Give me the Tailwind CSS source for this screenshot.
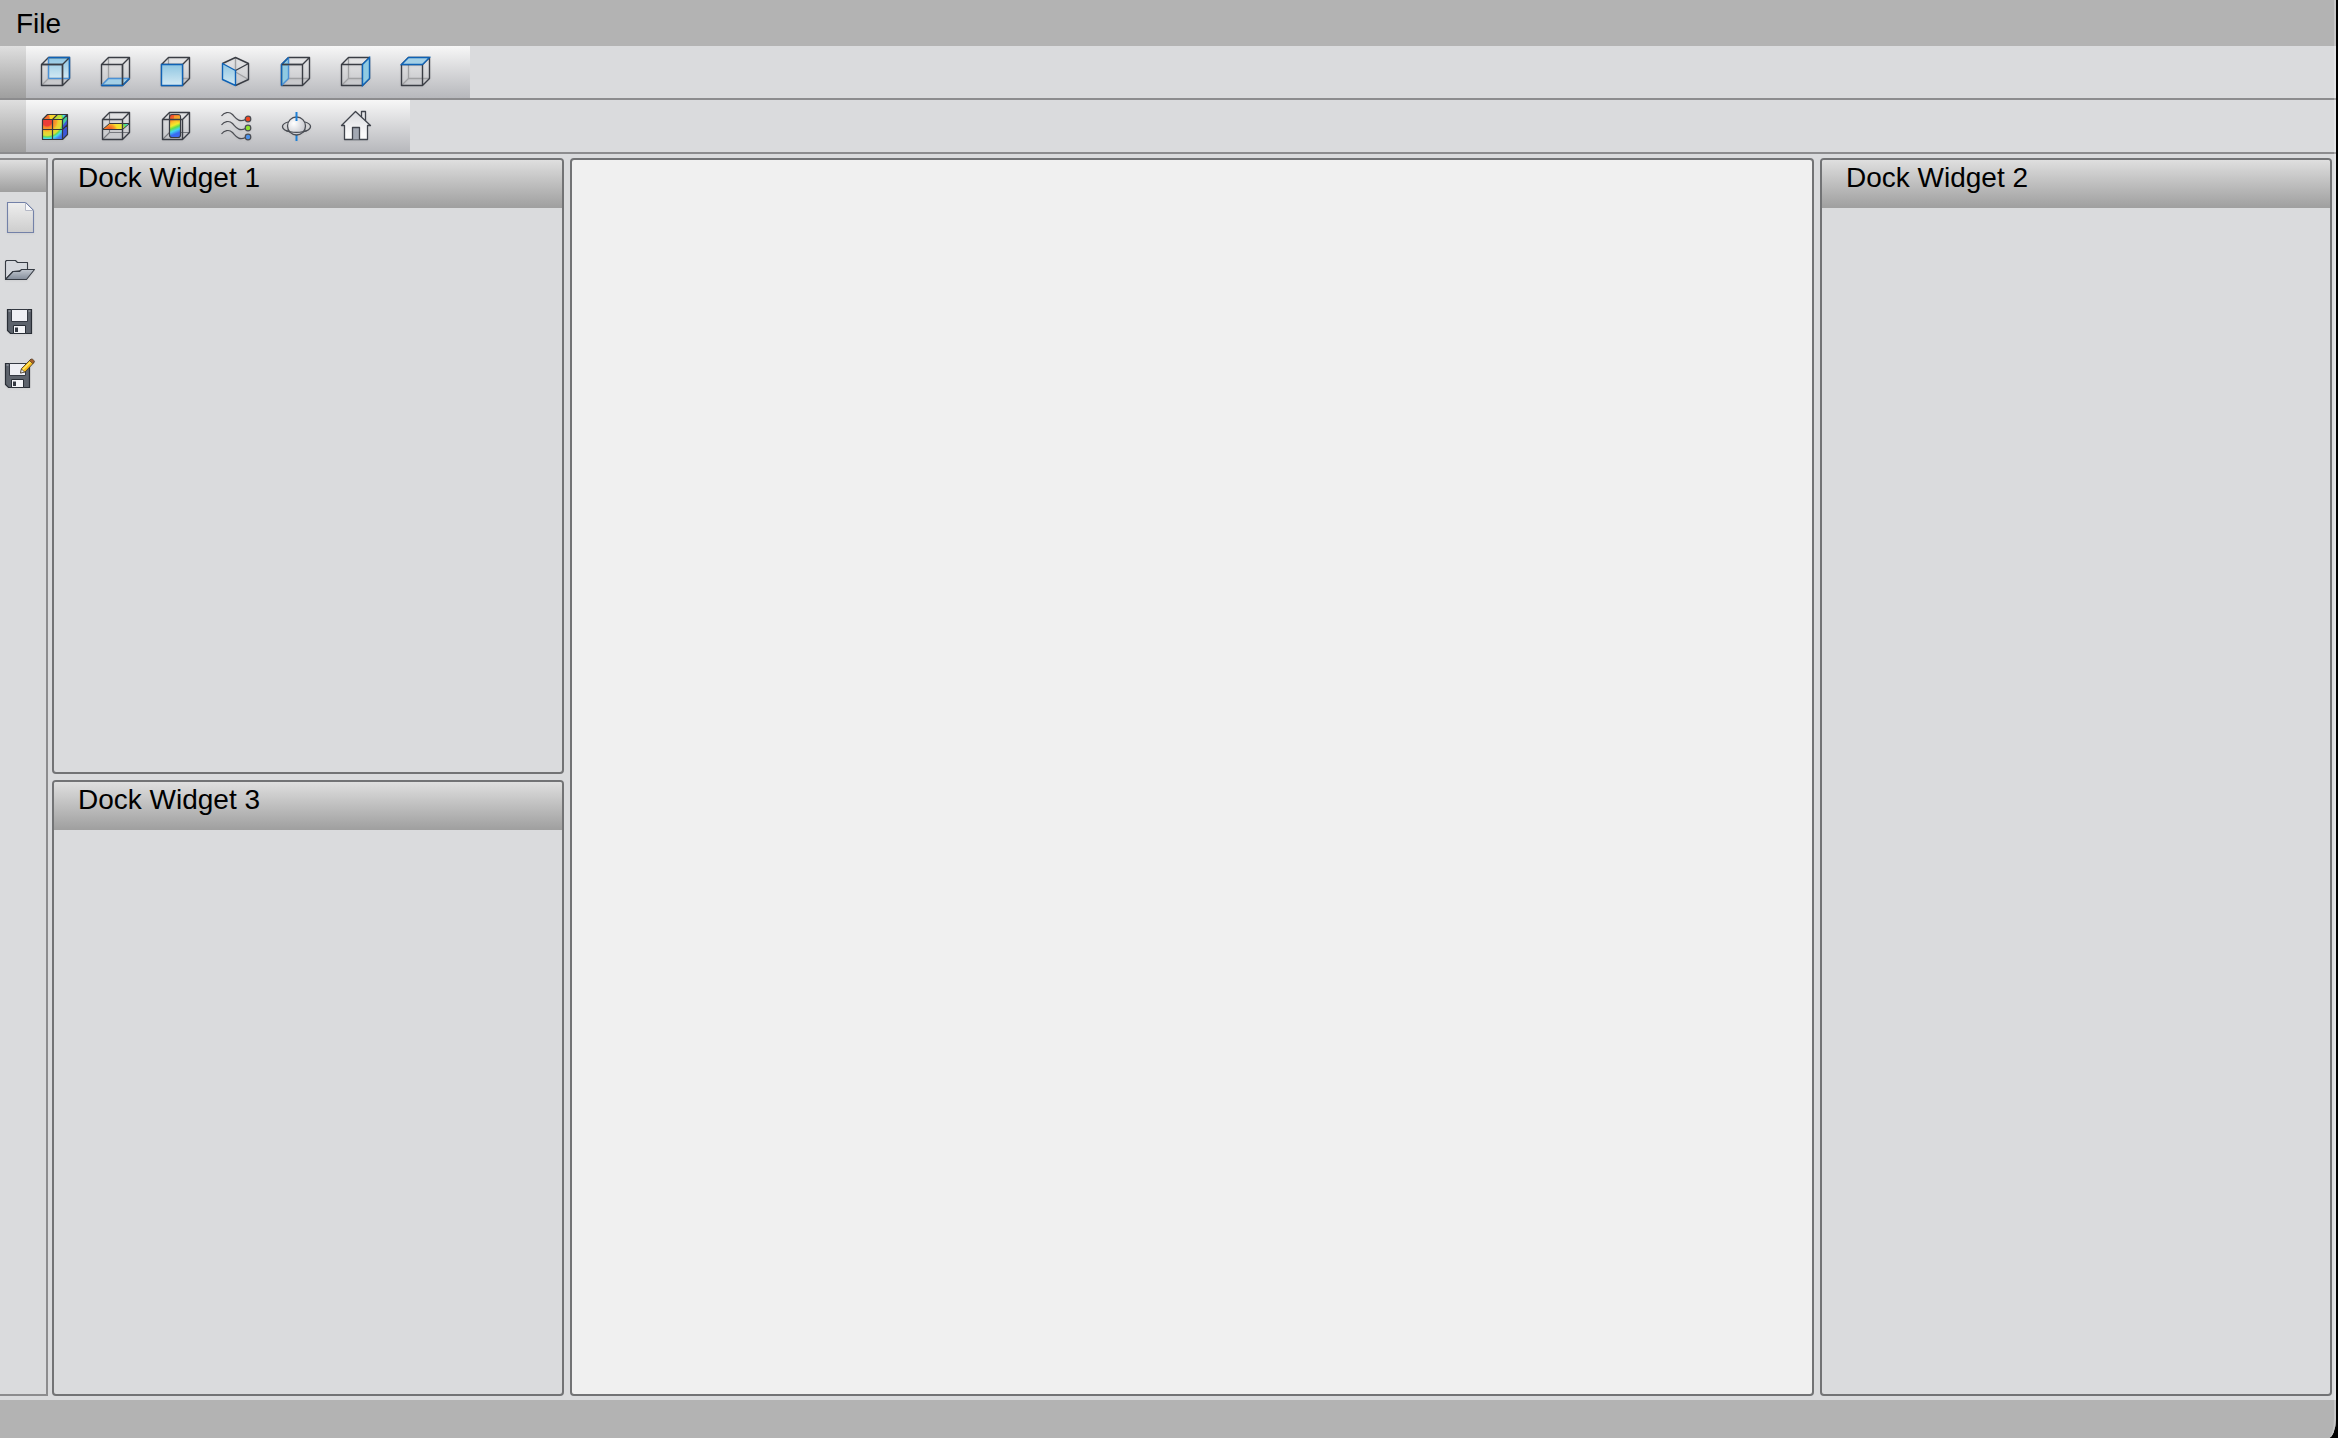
<!DOCTYPE html>
<html lang="en">

<head>
    <meta charset="UTF-8">
    <meta name="viewport" content="width=device-width, initial-scale=1.0">
    <title>Dock Widgets</title>
    <script src="https://cdn.jsdelivr.net/npm/@tailwindcss/browser@4"></script>
</head>

<body class="bg-black h-screen pr-0.5 font-['Liberation_Sans',Arial,sans-serif] text-[28px] leading-8 text-black">

    <!-- shared gradients and cube outlines -->
    <svg class="absolute size-0" aria-hidden="true">
        <defs>
            <linearGradient id="blue" x1="0" y1="0" x2="0" y2="1">
                <stop offset="0" stop-color="#8fc6e2" />
                <stop offset="1" stop-color="#d3e9f3" />
            </linearGradient>
            <linearGradient id="rainbow" x1="0.1" y1="0" x2="0.3" y2="1">
                <stop offset="0" stop-color="#f0382c" />
                <stop offset="0.18" stop-color="#f5642a" />
                <stop offset="0.36" stop-color="#fbc02a" />
                <stop offset="0.5" stop-color="#f3ea2c" />
                <stop offset="0.62" stop-color="#63e04a" />
                <stop offset="0.75" stop-color="#42d5f2" />
                <stop offset="0.9" stop-color="#3b6af0" />
            </linearGradient>
            <radialGradient id="heat" gradientUnits="userSpaceOnUse" cx="7" cy="11" r="24">
                <stop offset="0.2" stop-color="#ec3d38" />
                <stop offset="0.26" stop-color="#f58228" />
                <stop offset="0.4" stop-color="#f8a62c" />
                <stop offset="0.46" stop-color="#ead12f" />
                <stop offset="0.6" stop-color="#e0dc38" />
                <stop offset="0.66" stop-color="#62dc55" />
                <stop offset="0.73" stop-color="#47dcea" />
                <stop offset="0.84" stop-color="#4580ee" />
                <stop offset="1" stop-color="#3d5ff0" />
            </radialGradient>
            <radialGradient id="slice" gradientUnits="userSpaceOnUse" cx="9" cy="21" r="21">
                <stop offset="0.15" stop-color="#f2632a" />
                <stop offset="0.3" stop-color="#f89a29" />
                <stop offset="0.42" stop-color="#f7e02c" />
                <stop offset="0.7" stop-color="#e6ea34" />
                <stop offset="0.8" stop-color="#4fe06c" />
                <stop offset="0.95" stop-color="#45dff0" />
            </radialGradient>
            <radialGradient id="ball" cx="0.35" cy="0.35" r="0.7">
                <stop offset="0" stop-color="#ffffff" />
                <stop offset="1" stop-color="#c6c7cd" />
            </radialGradient>
            <linearGradient id="paper" x1="0" y1="0" x2="0" y2="1">
                <stop offset="0" stop-color="#eeeeee" />
                <stop offset="1" stop-color="#cdcdcd" />
            </linearGradient>
            <linearGradient id="steel" x1="0" y1="0" x2="0" y2="1">
                <stop offset="0" stop-color="#c2c8d0" />
                <stop offset="1" stop-color="#838c99" />
            </linearGradient>
            <linearGradient id="wall" x1="0" y1="0" x2="0" y2="1">
                <stop offset="0" stop-color="#d9dade" />
                <stop offset="0.8" stop-color="#fafafa" />
            </linearGradient>

            <g id="cube-back" fill="none" stroke="#a0a1a3" stroke-width="1.3">
                <path d="M8.5 1.5V22.5M8.5 22.5H29.5M8.5 22.5L1.5 29.5" />
            </g>
            <g id="cube-front" fill="none" stroke="#3a3d44" stroke-width="1.4" stroke-linejoin="round">
                <path d="M1.5 8.5H22.5V29.5H1.5ZM1.5 8.5L8.5 1.5H29.5V22.5L22.5 29.5M22.5 8.5L29.5 1.5" />
            </g>
            <g id="box-back" fill="none" stroke="#77797e" stroke-width="1.1">
                <path d="M9.5 2.5V22.5M9.5 22.5H29.5M9.5 22.5L2.5 29.5" />
            </g>
            <g id="box-front" fill="none" stroke="#3a3d44" stroke-width="1.4" stroke-linejoin="round">
                <path d="M2.5 9.5H22.5V29.5H2.5ZM2.5 9.5L9.5 2.5H29.5V22.5L22.5 29.5M22.5 9.5L29.5 2.5" />
            </g>
            <g id="disk">
                <path d="M3.5 3.5H27.5V27.5H6.5L3.5 24.5Z" fill="#5d636c" stroke="#292e36" stroke-width="1.2" />
                <path d="M4.5 5H6.5M24.5 5H26.5" stroke="#aeb3ba" stroke-width="1" />
                <path d="M7.5 3.5H23.5V15.5H7.5Z" fill="#eeeff4" stroke="#343942" />
                <path d="M9.5 19.5H21.5V27.5H9.5Z" fill="#f3f4f7" stroke="#292e36" />
                <path d="M11 21.5H14V26H11Z" fill="#343942" />
            </g>
        </defs>
    </svg>

    <div class="relative flex flex-col h-full overflow-hidden rounded-br-[8px_20px] bg-[#dadbdd]">

        <nav class="bg-[#b3b3b3] h-[46px] shrink-0 flex items-end px-4 pb-1.5">
            <button>File</button>
        </nav>

        <!-- view toolbar -->
        <div class="flex h-[54px] shrink-0 border-b-2 border-[#8c8c8e]" role="toolbar" aria-label="Views">
            <div class="w-[26px] bg-linear-to-b from-[#dfdfdf] to-[#9f9f9f]"></div>
            <div class="flex pr-6 bg-linear-to-b from-[#f7f7f7] to-[#b7b8bc]">
                <button class="w-15 flex items-center justify-center" aria-label="Back view">
                    <svg class="size-8 drop-shadow-xs" viewBox="0 0 32 32">
                        <path d="M8.5 1.5H29.5V22.5H8.5Z" fill="url(#blue)" />
                        <use href="#cube-back" />
                        <use href="#cube-front" />
                        <path d="M8.5 22.5V1.5" stroke="#4b91d6" stroke-width="1.4" />
                        <path d="M8.5 22.5H29.5" stroke="#4b91d6" stroke-width="1.4" />
                        <path d="M8.5 1.5H29.5V22.5" fill="none" stroke="#0f62b5" stroke-width="1.4" />
                        <path d="M1.5 8.5H22.5V29.5" fill="none" stroke="#3a3d44" stroke-width="1.4" />
                    </svg>
                </button>
                <button class="w-15 flex items-center justify-center" aria-label="Bottom view">
                    <svg class="size-8 drop-shadow-xs" viewBox="0 0 32 32">
                        <use href="#cube-back" />
                        <path d="M8.5 22.5H29.5L22.5 29.5H1.5Z" fill="#a4d0e6" />
                        <use href="#cube-front" />
                        <path d="M1.5 29.5L8.5 22.5H29.5" fill="none" stroke="#4b91d6" stroke-width="1.4" />
                        <path d="M1.5 29.5H22.5L29.5 22.5" fill="none" stroke="#0f62b5" stroke-width="1.4" />
                        <path d="M22.5 8.5V29" stroke="#3a3d44" stroke-width="1.4" />
                    </svg>
                </button>
                <button class="w-15 flex items-center justify-center" aria-label="Front view">
                    <svg class="size-8 drop-shadow-xs" viewBox="0 0 32 32">
                        <use href="#cube-back" />
                        <use href="#cube-front" />
                        <path d="M1.5 8.5H22.5V29.5H1.5Z" fill="url(#blue)" stroke="#0f62b5" stroke-width="1.4" />
                    </svg>
                </button>
                <button class="w-15 flex items-center justify-center" aria-label="Isometric view">
                    <svg class="size-8 drop-shadow-xs" viewBox="0 0 32 32" fill="none" stroke-linejoin="round">
                        <path d="M15.5 1.5V16L28.5 23.5" stroke="#a0a1a3" stroke-width="1.4" />
                        <path d="M2.5 7.5L15.5 1.5L28.5 7.5V23.5L15.5 29.5M15.5 14.5L28.5 7.5" stroke="#3a3d44" stroke-width="1.4" />
                        <path d="M2.5 7.5L15.5 14.5V29.5L2.5 23.5Z" fill="url(#blue)" stroke="#0f62b5" stroke-width="1.4" />
                    </svg>
                </button>
                <button class="w-15 flex items-center justify-center" aria-label="Left view">
                    <svg class="size-8 drop-shadow-xs" viewBox="0 0 32 32">
                        <use href="#cube-back" />
                        <path d="M1.5 8.5L8.5 1.5V22.5L1.5 29.5Z" fill="#8fcae2" />
                        <use href="#cube-front" />
                        <path d="M8.5 1.5V22.5L1.5 29.5" fill="none" stroke="#4b91d6" stroke-width="1.4" />
                        <path d="M8.5 1.5L1.5 8.5V29.5" fill="none" stroke="#0f62b5" stroke-width="1.4" />
                        <path d="M2 8.5H22.5" stroke="#3a3d44" stroke-width="1.4" />
                    </svg>
                </button>
                <button class="w-15 flex items-center justify-center" aria-label="Right view">
                    <svg class="size-8 drop-shadow-xs" viewBox="0 0 32 32">
                        <use href="#cube-back" />
                        <use href="#cube-front" />
                        <path d="M22.5 8.5L29.5 1.5V22.5L22.5 29.5Z" fill="#8fcae2" stroke="#0f62b5" stroke-width="1.4" />
                    </svg>
                </button>
                <button class="w-15 flex items-center justify-center" aria-label="Top view">
                    <svg class="size-8 drop-shadow-xs" viewBox="0 0 32 32">
                        <use href="#cube-back" />
                        <use href="#cube-front" />
                        <path d="M1.5 8.5L8.5 1.5H29.5L22.5 8.5Z" fill="#a4d0e6" stroke="#0f62b5" stroke-width="1.4" />
                    </svg>
                </button>
            </div>
        </div>

        <!-- results toolbar -->
        <div class="flex h-[54px] shrink-0 border-b-2 border-[#8c8c8e]" role="toolbar" aria-label="Results">
            <div class="w-[26px] bg-linear-to-b from-[#dfdfdf] to-[#9f9f9f]"></div>
            <div class="flex pr-6 bg-linear-to-b from-[#f7f7f7] to-[#b7b8bc]">
                <button class="w-15 flex items-center justify-center" aria-label="Surface contour">
                    <svg class="size-8 drop-shadow-xs" viewBox="0 0 32 32" fill="none">
                        <path d="M2.5 9.5L7.5 4.5H27.5V24.5L22.5 29.5H2.5Z" fill="url(#heat)" />
                        <path d="M7.5 4.5H17L12 9.5H2.5Z" fill="#f6702c" />
                        <path d="M9 4.5H19L14 9.5H10Z" fill="#f7d52c" />
                        <path d="M19 4.5H22.5L17.5 9.5H14Z" fill="#b4e236" />
                        <path d="M22.5 9.5L27.5 4.5V24.5L22.5 29.5Z" fill="#3c56d8" />
                        <path d="M22.5 9.5L27.5 4.5V9L22.5 16Z" fill="#43cf9c" />
                        <path d="M2.5 9.5H22.5V29.5H2.5ZM2.5 9.5L7.5 4.5H27.5V24.5L22.5 29.5M22.5 9.5L27.5 4.5M12.5 29.5V9.5L17.5 4.5M2.5 19.5H22.5L27.5 14.5" stroke="#34363c" stroke-width="1.2" stroke-linejoin="round" />
                    </svg>
                </button>
                <button class="w-15 flex items-center justify-center" aria-label="Cut plane">
                    <svg class="size-8 drop-shadow-xs" viewBox="0 0 32 32">
                        <use href="#box-back" />
                        <path d="M2.5 19.5L9.5 13.5H29.5L22.5 19.5Z" fill="url(#slice)" stroke="#34363c" />
                        <use href="#box-front" />
                    </svg>
                </button>
                <button class="w-15 flex items-center justify-center" aria-label="Iso surface">
                    <svg class="size-8 drop-shadow-xs" viewBox="0 0 32 32">
                        <use href="#box-back" />
                        <rect x="9.5" y="4.5" width="11" height="23" rx="2.5" fill="url(#rainbow)" stroke="#3a3d44" stroke-width="1.2" />
                        <path d="M14 5.5H20V13L14 9.5Z" fill="#f7b52b" opacity=".7" />
                        <use href="#box-front" />
                    </svg>
                </button>
                <button class="w-15 flex items-center justify-center" aria-label="Streamlines">
                    <svg class="size-8 drop-shadow-xs" viewBox="0 0 32 32" fill="none" stroke="#4a4c52" stroke-width="1.2">
                        <path d="M1.5 6C4 2.5 9 1 12.5 4.5C16 8 18.5 13 25.5 9.5" />
                        <path d="M1.5 15C4 11.5 9 10 12.5 13.5C16 17 18.5 22 25.5 18.5" />
                        <path d="M1.5 24C4 20.5 9 19 12.5 22.5C16 26 18.5 31 25.5 27.5" />
                        <circle cx="28" cy="9" r="2.8" fill="#f0441f" />
                        <circle cx="28" cy="18" r="2.8" fill="#8fe22c" />
                        <circle cx="28" cy="27" r="2.8" fill="#4a90e8" />
                    </svg>
                </button>
                <button class="w-15 flex items-center justify-center" aria-label="Rotate">
                    <svg class="size-8 drop-shadow-xs" viewBox="0 0 32 32" fill="none" stroke="#4a4d54" stroke-width="1.3">
                        <path d="M16.5 25V31" stroke="#1c7fd6" stroke-width="2" />
                        <path d="M8 12C4.5 13 2.5 14.5 2.5 16.5C2.5 20 9 22.5 16.5 22.5C24 22.5 30.5 20 30.5 16.5C30.5 14.5 28.5 13 25 12" />
                        <circle cx="16.5" cy="16" r="9" fill="url(#ball)" />
                        <path d="M6 20.5C11 23 22 23 27 20.5" />
                        <path d="M16.5 2V11" stroke="#1c7fd6" stroke-width="2" />
                    </svg>
                </button>
                <button class="w-15 flex items-center justify-center" aria-label="Home">
                    <svg class="size-8 drop-shadow-xs" viewBox="0 0 32 32" stroke="#3f434b" stroke-width="1.3" stroke-linejoin="round">
                        <path d="M21.5 7V1.5H25.5V11" fill="#e4e5e8" />
                        <path d="M15.5 1.5L30.5 15.5H27.5V29.5H4.5V15.5H1.5Z" fill="url(#wall)" />
                        <path d="M12.5 29.5V17.5H19.5V29.5" fill="#a3a9b3" />
                    </svg>
                </button>
            </div>
        </div>

        <main class="flex flex-1 min-h-0 py-1 pr-1">

            <!-- file toolbar -->
            <div class="w-12 shrink-0 mr-1 flex flex-col border-y-2 border-r-2 border-[#8c8c8e]" role="toolbar" aria-label="File">
                <div class="h-8 shrink-0 bg-linear-to-b from-[#dfdfdf] to-[#9f9f9f]"></div>
                <button class="h-13 pl-1" aria-label="New">
                    <svg class="size-8 drop-shadow-xs" viewBox="0 0 32 32">
                        <path d="M3.5 .5H21.5L29.5 8.5V30.5H3.5Z" fill="url(#paper)" stroke="#7381a8" stroke-width="1.1" />
                        <path d="M21.5 .5L29.5 8.5H21.5Z" fill="#f8f8fa" stroke="#b4b8c6" />
                        <path d="M21.5 .5L29.5 8.5" stroke="#7381a8" />
                    </svg>
                </button>
                <button class="h-13 pl-1" aria-label="Open">
                    <svg class="size-8 drop-shadow-xs" viewBox="0 0 32 32" stroke="#363b43" stroke-width="1.1" stroke-linejoin="round">
                        <path d="M1.5 25.5V7.5L2.5 6.5H11.5L13.5 8.5H23.5V16L9 17.5Z" fill="#d5d8dd" />
                        <path d="M1.5 25.5L9 17.5H15.5L17.5 15.5H30.5L22.5 25.5Z" fill="url(#steel)" />
                    </svg>
                </button>
                <button class="h-13 pl-1" aria-label="Save">
                    <svg class="size-8 drop-shadow-xs" viewBox="0 0 32 32">
                        <use href="#disk" />
                    </svg>
                </button>
                <button class="h-13 pl-1" aria-label="Save as">
                    <svg class="size-8 drop-shadow-xs" viewBox="0 0 32 32">
                        <use href="#disk" x="-2" y="2" />
                        <path d="M16.5 15L17.5 10.5L26.5 1.5L30 4.5L21 14Z" fill="#f8bd1d" stroke="#3b3024" stroke-width=".8" />
                        <path d="M19 11.5L26.5 4" stroke="#ffea6b" stroke-width="1.2" />
                        <path d="M16.5 15L17.5 11L20.5 14Z" fill="#f1f1f1" stroke="#3b3024" stroke-width=".6" />
                        <path d="M26.5 1.5L28 .8L30.5 3L30 4.5L28.5 5.5L25.5 2.5Z" fill="#a8602c" stroke="#3b3024" stroke-width=".6" />
                    </svg>
                </button>
            </div>

            <div class="flex-1 flex gap-1.5 min-w-0">
                <div class="w-128 shrink-0 flex flex-col gap-1.5">
                    <section class="flex-1 rounded-sm overflow-hidden border-2 border-[#727375]">
                        <h2 class="h-12 pl-6 pt-0.5 bg-linear-to-b from-[#dfdfdf] to-[#9f9f9f]">Dock Widget 1</h2>
                    </section>
                    <section class="flex-1 rounded-sm overflow-hidden border-2 border-[#727375]">
                        <h2 class="h-12 pl-6 pt-0.5 bg-linear-to-b from-[#dfdfdf] to-[#9f9f9f]">Dock Widget 3</h2>
                    </section>
                </div>

                <section class="flex-1 rounded-sm border-2 border-[#727375] bg-[#f0f0f0]" aria-label="Viewport"></section>

                <section class="w-128 shrink-0 rounded-sm overflow-hidden border-2 border-[#727375]">
                    <h2 class="h-12 pl-6 pt-0.5 bg-linear-to-b from-[#dfdfdf] to-[#9f9f9f]">Dock Widget 2</h2>
                </section>
            </div>
        </main>

        <footer class="h-[38px] shrink-0 bg-[#b3b3b3]"></footer>

        <!-- light rim of the window -->
        <div class="absolute inset-0 rounded-br-[8px_20px] border-r-2 border-white/25 pointer-events-none"></div>
    </div>

</body>

</html>
